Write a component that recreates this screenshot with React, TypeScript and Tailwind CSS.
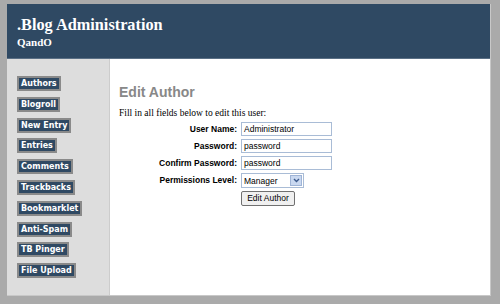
import React from "react";

const links = ["Authors","Blogroll","New Entry","Entries","Comments","Trackbacks","Bookmarklet","Anti-Spam","TB Pinger","File Upload"];

export default function App() {
  return (
    <div className="w-[500px] h-[304px] bg-[#aaaaaa] pt-[4px] pl-[7px] overflow-hidden">
      <div className="w-[484px] border-r border-[#c8c8c8]">
        <div className="h-[55px] bg-[#2f4963] pl-[10px] pt-[11px] text-white border-b border-[#5a6f85]" style={{fontFamily: '"Liberation Serif", "Times New Roman", serif'}}>
          <div className="text-[16.3px] font-bold leading-[20px]">.Blog Administration</div>
          <div className="text-[11px] font-bold leading-[14px]">QandO</div>
        </div>
        <div className="flex h-[237px] border-b border-[#c8c8c8]">
          <div className="w-[103px] bg-[#dddddd] border-r border-[#cccccc] pl-[10px] pt-[17px] flex flex-col items-start gap-[5.8px]">
            {links.map((l) => (
              <div key={l} className="h-[15px] bg-[#2f4963] border-2 border-[#8a8a8a] text-white font-bold text-[8px] leading-[11px] px-[2px] whitespace-nowrap" style={{fontFamily: '"DejaVu Sans", Verdana, sans-serif'}}>{l}</div>
            ))}
          </div>
          <div className="flex-1 bg-white pl-[9px] pt-[25px]">
            <div className="text-[14px] font-bold text-[#888888] leading-[16px]" style={{fontFamily: '"Liberation Sans", Arial, sans-serif'}}>Edit Author</div>
            <div className="text-[9.5px] mt-[8px] leading-[11px] text-black" style={{fontFamily: '"Liberation Serif", "Times New Roman", serif'}}>Fill in all fields below to edit this user:</div>
            <div className="grid grid-cols-[118px_auto] gap-x-[4px] gap-y-[3px] mt-[3px] items-center text-[8.5px]" style={{fontFamily: '"Liberation Sans", Arial, sans-serif'}}>
              <div className="text-right font-bold">User Name:</div>
              <div className="w-[91px] h-[14px] border border-[#a9bcd6] pl-[2px] leading-[12px]">Administrator</div>
              <div className="text-right font-bold">Password:</div>
              <div className="w-[91px] h-[14px] border border-[#a9bcd6] pl-[2px] leading-[12px]">password</div>
              <div className="text-right font-bold">Confirm Password:</div>
              <div className="w-[91px] h-[14px] border border-[#a9bcd6] pl-[2px] leading-[12px]">password</div>
              <div className="text-right font-bold">Permissions Level:</div>
              <div className="w-[63px] h-[15px] border border-[#a9bcd6] pl-[2px] flex items-center justify-between pr-[1px]">
                <span className="leading-[12px]">Manager</span>
                <span className="w-[12px] h-[11px] bg-[#c9d8f0] border border-[#9fb4d6] flex items-center justify-center">
                  <svg width="7" height="5" viewBox="0 0 7 5"><path d="M1 1 L3.5 3.5 L6 1" stroke="#3c5a8c" strokeWidth="1.4" fill="none"/></svg>
                </span>
              </div>
              <div></div>
              <div className="w-[54px] h-[15px] border border-[#707070] rounded-[2px] bg-[#f0f0f0] text-center leading-[13px]">Edit Author</div>
            </div>
          </div>
        </div>
      </div>
    </div>
  );
}
